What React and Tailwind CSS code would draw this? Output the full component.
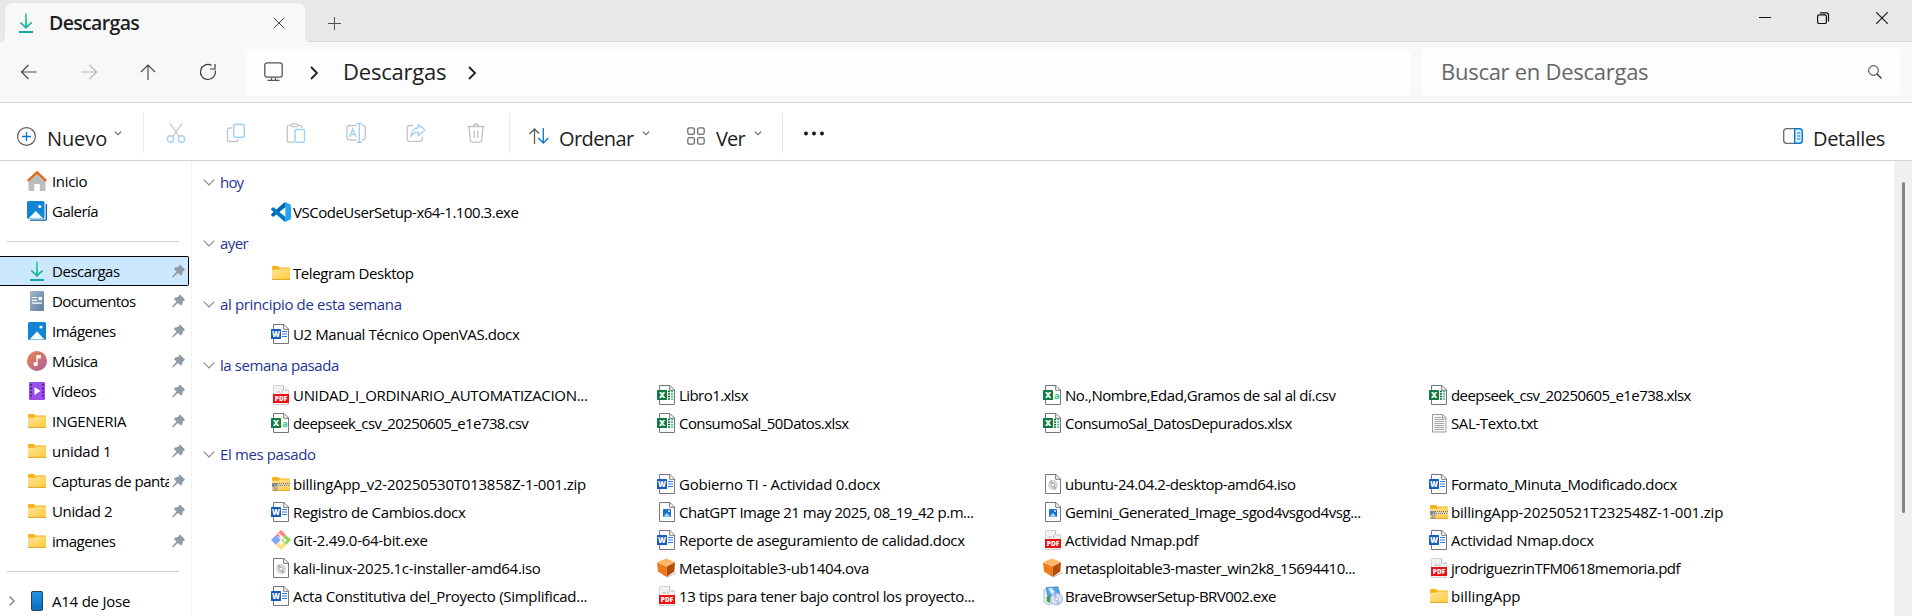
import React from "react";

/* ---------- file and folder icons (20 x 20) ---------- */

const Svg = ({ w = 20, h = 20, className = "", children }) => (
  <svg width={w} height={h} viewBox={`0 0 ${w} ${h}`} fill="none" className={`shrink-0 ${className}`}>
    {children}
  </svg>
);

const Page = () => (
  <>
    <path d="M2.5 .5H13l4.5 4.5v14.5h-15z" fill="#fff" stroke="#767676" />
    <path d="M12.7 .5v4.8h4.8" stroke="#767676" />
  </>
);

const Word = () => (
  <Svg>
    <Page />
    <path d="M11 7.500h5M11 12.500h5" stroke="#2b7cd3" />
    <path d="M11 10h5" stroke="#2b7cd3" />
    <rect x="0" y="5" width="10" height="10" rx=".6" fill="#185abd" />
    <text x="5" y="13" textAnchor="middle" fontSize="8.500" fontWeight="800" fill="#fff" fontFamily="Open Sans, sans-serif" textLength="8" lengthAdjust="spacingAndGlyphs">W</text>
  </Svg>
);

const ExcelBadge = () => (
  <>
    <rect x="0" y="5" width="10" height="10" rx=".6" fill="#107c41" />
    <text x="5" y="13" textAnchor="middle" fontSize="8.500" fontWeight="800" fill="#fff" fontFamily="Open Sans, sans-serif">X</text>
  </>
);

const Xlsx = () => (
  <Svg>
    <Page />
    <path d="M11 6.500h2M11 9h2M11 11.500h2M11 14h2" stroke="#185c37" strokeWidth="1.500" />
    <path d="M14 6.500h2.200M14 9h2.200M14 11.500h2.200M14 14h2.200" stroke="#33c481" strokeWidth="1.500" />
    <ExcelBadge />
  </Svg>
);

const Csv = () => (
  <Svg>
    <Page />
    <text x="11" y="13.500" fontSize="9.500" fontWeight="700" fill="#33c481" fontFamily="Open Sans, sans-serif">a</text>
    <ExcelBadge />
  </Svg>
);

const Pdf = () => (
  <Svg>
    <path d="M3 .5h9.500L17.500 5v14.500H2.500V1z" fill="#f1f1f1" stroke="#d2d2d2" />
    <path d="M12.500 .5V5h5" fill="#fff" stroke="#c2c2c2" />
    <path d="M6 8c0-2 2.500-2 2.500 0M10 5.500c1.500 0 1.500 2.500 0 2.500" stroke="#cfcfcf" strokeWidth="1.500" />
    <rect x="2" y="9" width="16" height="9" fill="#ee1111" />
    <text x="10" y="15.800" textAnchor="middle" fontSize="6.300" fontWeight="800" fill="#fff" fontFamily="Open Sans, sans-serif" textLength="12.500" lengthAdjust="spacingAndGlyphs">PDF</text>
  </Svg>
);

const Iso = () => (
  <Svg>
    <Page />
    <circle cx="10" cy="11" r="5" fill="#d6d9da" />
    <path d="M10 11 6 8a5 5 0 0 1 3-2zM10 11l4 3a5 5 0 0 1-3 2z" fill="#b2b7b9" />
    <circle cx="10" cy="11" r="1.800" fill="#f7f7f7" stroke="#a0a5a7" strokeWidth=".8" />
  </Svg>
);

const ImageFile = () => (
  <Svg>
    <Page />
    <rect x="6" y="7" width="8" height="8" rx=".8" fill="#1b6fd0" />
    <path d="m6.300 14.800 3.500-3.800 3.800 3.800z" fill="#9fdcff" />
    <circle cx="12" cy="9" r=".9" fill="#fff" />
  </Svg>
);

const Txt = () => (
  <Svg>
    <path d="M3.500 1.500h10.500l3 3v14.500h-13.500z" fill="#f5f5f5" stroke="#9b9b9b" />
    <path d="M13.500 1.500v3.500h3.500" stroke="#9b9b9b" />
    <path d="M5.500 4.500h7M5.500 6.500h9.500M5.500 8.500h9.500M5.500 10.500h9.500M5.500 12.500h9.500M5.500 14.500h9.500M5.500 16.500h9.500" stroke="#a8a8a8" />
  </Svg>
);

const FolderShape = () => (
  <>
    <defs>
      <linearGradient id="folder" x1="0" y1="0" x2="1" y2="1">
        <stop offset="0" stopColor="#ffe59a" />
        <stop offset="1" stopColor="#ffcb3d" />
      </linearGradient>
    </defs>
    <path d="M1 4.200a1.200 1.200 0 0 1 1.200-1.200h4.600L8.600 4.500H18a1 1 0 0 1 1 1V8H1z" fill="#f7b21b" />
    <path d="M1 6.800h6.500l1.500-1.300h10V16.200H1z" fill="url(#folder)" />
    <path d="M1 16.400h18" stroke="#e5a21c" strokeWidth="1" />
  </>
);

const Folder = () => <Svg><FolderShape /></Svg>;

const Zip = () => (
  <Svg>
    <FolderShape />
    <path d="M6 9.700h13" stroke="#6f6f6f" strokeWidth="1.400" strokeDasharray="1 1" />
    <path d="M6 11.300h13" stroke="#e3e3e3" strokeWidth="1.600" />
    <path d="M6 11.500h13" stroke="#6f6f6f" strokeWidth="1" strokeDasharray="1 1" strokeDashoffset="1" />
    <rect x="1" y="9" width="5" height="4" fill="#8b8b8b" />
    <rect x="3" y="11" width="3" height="5.500" fill="#b9b9b9" stroke="#777" strokeWidth=".6" />
  </Svg>
);

const VsCode = () => (
  <Svg>
    <path d="M14.600 5 2.800 14.500a1 1 0 0 1-1.200 0L.4 13.400a.9.900 0 0 1 0-1.300L13.500 .3 14.600 1z" fill="#0065a9" />
    <path d="M14.600 15 2.800 5.500a1 1 0 0 0-1.200 0L.4 6.600a.9.900 0 0 0 0 1.300l13.100 11.800 1.100-.7z" fill="#007acc" />
    <path d="M14.300 .1 19.300 2.400q.7.400.7 1.100v13q0 .7-.7 1.100l-5 2.300z" fill="#24a5f3" />
  </Svg>
);

const Git = () => (
  <Svg>
    <path d="M10 0 15 5 10 9.500 5 5z" fill="#ff7f7a" />
    <path d="M5 5 9.500 10 5 15 0 10z" fill="#7fa9ff" />
    <path d="M15 5 20 10 15 15 10.500 10z" fill="#8fd45c" />
    <path d="M10 10.500 15 15 10 20 5 15z" fill="#ffe07a" />
    <path d="M7.500 3.500 10 6v7.500M10 6.500l4 3.500" stroke="#fff" strokeWidth="1.200" />
    <circle cx="10" cy="6.500" r="1.600" fill="#fff" />
    <circle cx="10" cy="13.500" r="1.600" fill="#fff" />
    <circle cx="14" cy="10.300" r="1.500" fill="#fff" />
  </Svg>
);

const Ova = () => (
  <Svg>
    <path d="M9.500 19 19 14.500v1L10 19.800z" fill="#8d8d8d" opacity=".6" />
    <path d="M0 4.200 9 .5l9 3.500-8.500 4.300z" fill="#ffb766" />
    <path d="M0 4.200 9.500 8.300V19L1 13.500z" fill="#ef7a1a" />
    <path d="M9.500 8.300 18 4l-.7 9.500L9.500 19z" fill="#b34d08" />
    <path d="M0 4.200 9.500 8.300 18 4" stroke="#ffd199" strokeWidth=".6" />
  </Svg>
);

const Brave = () => (
  <Svg>
    <path d="M1 4 6 2l4 2v13l-5 2-4-3z" fill="#e6edf4" stroke="#8ea4bd" strokeWidth=".7" />
    <path d="M3 1.500 15 .8 17 9 5 11z" fill="#4fa4ea" stroke="#4a82bf" strokeWidth=".7" />
    <path d="M5 2.500 9 2l3 4-3 3z" fill="#d3edff" />
    <path d="M3.500 11 7 10v7l-3-1.500z" fill="#35a04a" />
    <circle cx="13.500" cy="13" r="6" fill="#dce2f6" stroke="#8795c4" strokeWidth=".7" />
    <path d="M13.500 13 10 9a6 6 0 0 1 3-1.500zM13.500 13l3.500 4a6 6 0 0 1-3 1.500z" fill="#a5b6ef" />
    <circle cx="13.500" cy="13" r="1.700" fill="#fff" stroke="#8795c4" strokeWidth=".6" />
  </Svg>
);

/* ---------- navigation pane icons ---------- */

const Home = () => (
  <Svg>
    <path d="M1.500 9.500 10 2l8.500 7.500V19a1 1 0 0 1-1 1H12.800v-7H7.200v7H2.500a1 1 0 0 1-1-1z" fill="#bdbdbd" />
    <path d="M.7 9.800 10 1.300l9.300 8.500" stroke="#e4691a" strokeWidth="2.300" />
  </Svg>
);

const Picture = ({ stacked }) => (
  <Svg>
    {stacked && <path d="M3 19.200h15.400a.9.900 0 0 0 .9-.9V3" stroke="#0f5aa8" strokeWidth="1.300" />}
    <rect x={stacked ? 0 : 1} y={stacked ? 0 : 1} width={stacked ? 17.5 : 18} height={stacked ? 17.8 : 18} rx="1.500" fill="#1184d6" />
    <path d={stacked ? "M1.500 17.500 8.800 10l7.400 7.500z" : "M2.500 18.500 10 10.500l7.500 8z"} fill="#f2faff" />
    <circle cx={stacked ? 12.8 : 14} cy={stacked ? 5.5 : 6} r="1.600" fill="#fff" />
  </Svg>
);

const Download = ({ w = 20 }) => (
  <Svg w={w}>
    <defs>
      <linearGradient id="dl" x1="0" y1="0" x2="0" y2="20" gradientUnits="userSpaceOnUse">
        <stop offset="0" stopColor="#3ddc84" />
        <stop offset="1" stopColor="#0fa3a3" />
      </linearGradient>
    </defs>
    <path d="M10 .5v14M4.300 9.300l5.700 5.500 5.700-5.500M3 19h14" stroke="url(#dl)" strokeWidth="1.800" />
  </Svg>
);

const Documents = () => (
  <Svg>
    <defs>
      <linearGradient id="doc" x1="0" y1="0" x2="1" y2="1">
        <stop offset="0" stopColor="#a4b9cc" />
        <stop offset="1" stopColor="#5d7e9f" />
      </linearGradient>
    </defs>
    <rect x="3" y="0" width="14" height="20" rx="1.200" fill="url(#doc)" />
    <path d="M5 6.500h5M5 9.300h5M5 12.200h10" stroke="#fff" strokeWidth="1.200" />
    <rect x="11.500" y="6" width="3.500" height="3.200" fill="#fff" />
  </Svg>
);

const Music = () => (
  <Svg>
    <defs>
      <linearGradient id="music" x1="0" y1="0" x2="1" y2="1">
        <stop offset="0" stopColor="#f08a4b" />
        <stop offset="1" stopColor="#a65a9e" />
      </linearGradient>
    </defs>
    <circle cx="10" cy="10" r="10" fill="url(#music)" />
    <path d="M10 13V4.500h3.200v2.300H10" stroke="#fff" strokeWidth="1.200" fill="#fff" />
    <circle cx="8.600" cy="13.200" r="2.100" fill="#fff" />
  </Svg>
);

const Video = () => (
  <Svg>
    <rect x="2" y="1" width="16" height="18" rx="1.200" fill="#9a4fe8" />
    <path d="M4 3v15M16 3v15" stroke="#4a1d8f" strokeWidth="1.800" strokeDasharray="1.800 1.800" />
    <path d="M7.500 6v8l6-4z" fill="#fff" />
  </Svg>
);

const Phone = () => (
  <Svg>
    <defs>
      <linearGradient id="phone" x1="0" y1="0" x2="0" y2="1">
        <stop offset="0" stopColor="#2196e3" />
        <stop offset="1" stopColor="#0b6cbf" />
      </linearGradient>
    </defs>
    <rect x="4.500" y=".5" width="11" height="19" rx="1" fill="url(#phone)" stroke="#2d3f4c" />
  </Svg>
);

const Pin = () => (
  <Svg w={13} h={14}>
    <path d="M8 .5 12.900 5.500 12 6.900 10.800 7.300 10.300 10.300 8.900 11.600 5.900 8.900 1.200 13.300.2 13.400.3 12.400 4.500 7.600 1.800 4.900 3.200 3.500 6.300 3 6.900 1.600z" fill="#8f9ba5" />
  </Svg>
);

/* ---------- command bar pieces ---------- */

const Caret = () => (
  <Svg w={8} h={5}>
    <path d="m.8.700 3.200 3L7.200.700" stroke="#666" strokeWidth="1.100" />
  </Svg>
);

const Divider = () => <div className="h-10 w-px shrink-0 bg-[#e9e9e9]" />;

const Arrow = ({ className, d, color = "#4a4a4a" }) => (
  <Svg w={18} h={18} className={className}>
    <path d={d} stroke={color} strokeWidth="1.200" />
  </Svg>
);

const gray = "#c3c3c3";
const blue = "#a3d2f5";

/* ---------- data ---------- */

const pinned = [
  ["Descargas", Download, "tracking-[-0.45px]"],
  ["Documentos", Documents, "tracking-[-0.57px]"],
  ["Imágenes", Picture, "tracking-[-0.51px]"],
  ["Música", Music, "tracking-[-0.6px]"],
  ["Vídeos", Video, "tracking-[-0.37px]"],
  ["INGENERIA", Folder, "tracking-[-0.35px]"],
  ["unidad 1", Folder, "tracking-[-0.25px]"],
  ["Capturas de pantalla", Folder, "tracking-[-0.5px]"],
  ["Unidad 2", Folder, "tracking-[-0.36px]"],
  ["imagenes", Folder, "tracking-[-0.5px]"],
];

const groups = [
  { title: "hoy", track: "tracking-[-0.8px]", files: [["VSCodeUserSetup-x64-1.100.3.exe", VsCode, "tracking-[-0.48px]"]] },
  { title: "ayer", track: "tracking-[-0.6px]", files: [["Telegram Desktop", Folder, "tracking-[-0.42px]"]] },
  { title: "al principio de esta semana", track: "tracking-[-0.35px]", files: [["U2 Manual Técnico OpenVAS.docx", Word, "tracking-[-0.42px]"]] },
  {
    title: "la semana pasada",
    track: "tracking-[-0.43px]",
    files: [
      ["UNIDAD_I_ORDINARIO_AUTOMATIZACION...", Pdf, "tracking-[-0.31px]"],
      ["Libro1.xlsx", Xlsx, "tracking-[-0.56px]"],
      ["No.,Nombre,Edad,Gramos de sal al dí.csv", Csv, "tracking-[-0.44px]"],
      ["deepseek_csv_20250605_e1e738.xlsx", Xlsx, "tracking-[-0.58px]"],
      ["deepseek_csv_20250605_e1e738.csv", Csv, "tracking-[-0.59px]"],
      ["ConsumoSal_50Datos.xlsx", Xlsx, "tracking-[-0.55px]"],
      ["ConsumoSal_DatosDepurados.xlsx", Xlsx, "tracking-[-0.53px]"],
      ["SAL-Texto.txt", Txt, "tracking-[-0.38px]"],
    ],
  },
  {
    title: "El mes pasado",
    track: "tracking-[-0.38px]",
    files: [
      ["billingApp_v2-20250530T013858Z-1-001.zip", Zip, "tracking-[-0.22px]"],
      ["Gobierno TI - Actividad 0.docx", Word, "tracking-[-0.23px]"],
      ["ubuntu-24.04.2-desktop-amd64.iso", Iso, "tracking-[-0.46px]"],
      ["Formato_Minuta_Modificado.docx", Word, "tracking-[-0.37px]"],
      ["Registro de Cambios.docx", Word, "tracking-[-0.34px]"],
      ["ChatGPT Image 21 may 2025, 08_19_42 p.m...", ImageFile, "tracking-[-0.5px]"],
      ["Gemini_Generated_Image_sgod4vsgod4vsg...", ImageFile, "tracking-[-0.44px]"],
      ["billingApp-20250521T232548Z-1-001.zip", Zip, "tracking-[-0.19px]"],
      ["Git-2.49.0-64-bit.exe", Git, "tracking-[-0.29px]"],
      ["Reporte de aseguramiento de calidad.docx", Word, "tracking-[-0.33px]"],
      ["Actividad Nmap.pdf", Pdf, "tracking-[-0.25px]"],
      ["Actividad Nmap.docx", Word, "tracking-[-0.25px]"],
      ["kali-linux-2025.1c-installer-amd64.iso", Iso, "tracking-[-0.31px]"],
      ["Metasploitable3-ub1404.ova", Ova, "tracking-[-0.33px]"],
      ["metasploitable3-master_win2k8_15694410...", Ova, "tracking-[-0.48px]"],
      ["jrodriguezrinTFM0618memoria.pdf", Pdf, "tracking-[-0.5px]"],
      ["Acta Constitutiva del_Proyecto (Simplificad...", Word, "tracking-[-0.29px]"],
      ["13 tips para tener bajo control los proyecto...", Pdf, "tracking-[-0.37px]"],
      ["BraveBrowserSetup-BRV002.exe", Brave, "tracking-[-0.53px]"],
      ["billingApp", Folder, "tracking-[0px]"],
    ],
  },
];

/* ---------- sections ---------- */

function TitleBar() {
  return (
    <header className="flex h-[42px] shrink-0 border-b border-[#d9d9d9] bg-[#e8e8e8]">
      <Svg w={5} h={5} className="mt-[37px]">
        <path d="M5 0v5H0q5 0 5-5z" fill="#f8f8f8" />
      </Svg>
      <div className="mt-[3px] -mb-px flex h-[39px] w-[300px] items-center rounded-t-lg bg-[#f8f8f8] pl-[11px]">
        <Download />
        <span className="mt-px ml-[13px] w-[211px] text-[19.5px] leading-6 font-semibold tracking-[-0.65px] text-[#1f1f1f]">Descargas</span>
        <Svg w={12} h={12} className="ml-[13px]">
          <path d="m.7.700 10.600 10.600M11.300.700.700 11.300" stroke="#4a4a4a" />
        </Svg>
      </div>
      <Svg w={5} h={5} className="mt-[37px]">
        <path d="M0 0v5h5q-5 0-5-5z" fill="#f8f8f8" />
      </Svg>
      <Svg w={13} h={13} className="mt-[17px] ml-[18px]">
        <path d="M6.500 0v13M0 6.500h13" stroke="#4f4f4f" />
      </Svg>
      <div className="mt-3 mr-6 ml-auto flex gap-[46px]">
        <Svg w={12} h={12}><path d="M0 5.500h12" stroke="#111" /></Svg>
        <Svg w={13} h={12}>
          <rect x=".6" y="2.800" width="8.800" height="8.700" rx="1.500" stroke="#111" strokeWidth="1.200" />
          <path d="M3 .8h6.500a2 2 0 0 1 2 2V9.500" stroke="#111" strokeWidth="1.200" />
        </Svg>
        <Svg w={12} h={12}><path d="m.3.300 11.400 11.400M11.700.300.300 11.700" stroke="#111" strokeWidth="1.100" /></Svg>
      </div>
    </header>
  );
}

function AddressBar() {
  return (
    <nav className="flex h-[61px] shrink-0 items-start border-b border-[#d6d6d6] bg-[#f8f8f8] text-[22px]">
      <div className="flex h-[60px] w-[246px] items-center pl-[20px]">
        <Arrow d="M16.500 9H1.500M8.500 2 1.500 9l7 7" />
        <Arrow className="ml-[42px]" color="#b9b9b9" d="M1.500 9h15M9.500 2l7 7-7 7" />
        <Arrow className="ml-[41px]" d="M9 17V2M2 9l7-7 7 7" />
        <Arrow className="ml-[42px]" color="#3a3a3a" d="M16.300 7.500A7.500 7.500 0 1 1 12.500 2.400M16 1v5h-5" />
      </div>
      <div className="mt-[7px] flex h-[47px] w-[1165px] items-center rounded-md bg-[#fdfdfd]">
        <Svg w={19} h={19} className="-mt-[2px] ml-[18px]">
          <rect x=".8" y=".8" width="17.400" height="14.400" rx="2.500" stroke="#555" strokeWidth="1.300" />
          <path d="M7.500 15.500v2.500M11.500 15.500v2.500M3.500 18.300h12" stroke="#555" strokeWidth="1.200" />
        </Svg>
        <Svg w={9} h={14} className="ml-[27px]"><path d="m1 1 6 6-6 6" stroke="#1d1d1d" strokeWidth="1.800" /></Svg>
        <span className="-mt-[3px] ml-[24px] w-[125px] leading-7 tracking-[-0.22px] text-[#1d1d1d]">Descargas</span>
        <Svg w={9} h={14}><path d="m1 1 6 6-6 6" stroke="#1d1d1d" strokeWidth="1.800" /></Svg>
      </div>
      <div className="mt-[6px] ml-[10px] flex h-[48px] w-[479px] items-center justify-between rounded-md bg-[#fdfdfd] pr-[18px] pl-5">
        <span className="-mt-[2px] leading-7 tracking-[-0.27px] text-[#666]">Buscar en Descargas</span>
        <Svg w={14} h={14}>
          <circle cx="5.500" cy="5.500" r="4.800" stroke="#2a2a2a" />
          <path d="m9 9 4.500 4.500" stroke="#2a2a2a" strokeWidth="1.200" />
        </Svg>
      </div>
    </nav>
  );
}

function CommandBar() {
  return (
    <div className="flex h-[58px] shrink-0 items-center border-b border-[#d2d2d2] bg-white pt-[3px] text-[20px] leading-7 text-[#1d1d1d]">
      <div className="flex w-[143px] items-center pl-[17px]">
        <Svg w={19} h={19} className="mt-[6px]">
          <circle cx="9.500" cy="9.500" r="8.900" stroke="#5c5c5c" strokeWidth="1.200" />
          <path d="M9.500 5v9M5 9.500h9" stroke="#0078d4" strokeWidth="1.300" />
        </Svg>
        <span className="mt-[11px] ml-[11px] w-[67px] tracking-[-0.1px]">Nuevo</span>
        <Caret />
      </div>
      <Divider />
      <div className="flex w-[365px] items-center gap-[40px] pl-[22px]">
        <Svg>
          <path d="M4 .5 13.500 14M16 .5 6.500 14" stroke={gray} strokeWidth="1.300" />
          <circle cx="4.500" cy="16" r="3.200" stroke={blue} strokeWidth="1.400" />
          <circle cx="15.500" cy="16" r="3.200" stroke={blue} strokeWidth="1.400" />
        </Svg>
        <Svg>
          <path d="M6 5H3.500a2 2 0 0 0-2 2v9.500a2 2 0 0 0 2 2H10a2 2 0 0 0 2-2V16" stroke={gray} strokeWidth="1.300" />
          <rect x="7.700" y="1.300" width="10.600" height="13" rx="2" stroke={blue} strokeWidth="1.500" />
        </Svg>
        <Svg>
          <path d="M8 19.200H2.800a1.500 1.500 0 0 1-1.500-1.500V3.800a1.500 1.500 0 0 1 1.500-1.500H5M12 2.300h2.200a1.500 1.500 0 0 1 1.500 1.500V5" stroke={gray} strokeWidth="1.300" />
          <rect x="5" y=".8" width="7" height="2.800" rx="1.400" stroke={gray} strokeWidth="1.200" />
          <rect x="9" y="6.500" width="9.500" height="12.700" rx="1.500" stroke={blue} strokeWidth="1.500" />
        </Svg>
        <Svg>
          <path d="M10.500 2.500H3.500a2.500 2.500 0 0 0-2.500 2.500v9.500a2.500 2.500 0 0 0 2.500 2.500h7M16 2.500a3 3 0 0 1 3.300 2.500v9.500A3 3 0 0 1 16 17" stroke={gray} strokeWidth="1.300" />
          <path d="M13.300 .8v18.400M10.500 .7h5.500M10.500 19.300h5.500M3.500 14 6.700 6l3.200 8M4.600 11.300h4.200" stroke={blue} strokeWidth="1.400" />
        </Svg>
        <Svg>
          <path d="M7 2.500H3.500a2.300 2.300 0 0 0-2.300 2.300V16a2.300 2.300 0 0 0 2.300 2.300H14a2.300 2.300 0 0 0 2.300-2.300v-2" stroke={gray} strokeWidth="1.300" />
          <path d="M12.500 1.500 19 7l-6.500 5.500V9.300C9 9.300 6.500 10.500 5 13.500c0-5 3-8.500 7.500-8.800z" stroke={blue} strokeWidth="1.400" strokeLinejoin="round" />
        </Svg>
        <Svg>
          <path d="M1 3.500h18M7.500 3.500a2.500 2.500 0 0 1 5 0M3 3.500 4.300 17.500a2 2 0 0 0 2 1.700h7.400a2 2 0 0 0 2-1.700L17 3.500M8.200 7.500v7.500M11.800 7.500v7.500" stroke={gray} strokeWidth="1.300" />
        </Svg>
      </div>
      <Divider />
      <div className="flex w-[177px] items-center pl-[19px]">
        <Svg w={20} h={16} className="mt-[6px]">
          <path d="M5.500 16V1M.5 6 5.500 1 10 5.500" stroke="#5c5c5c" strokeWidth="1.300" />
          <path d="M14.300 0v15M9.300 10l5 5 5-5" stroke="#0078d4" strokeWidth="1.300" />
        </Svg>
        <span className="mt-[11px] ml-[10px] w-[83px] tracking-[-0.6px]">Ordenar</span>
        <Caret />
      </div>
      <div className="flex w-[95px] items-center">
        <Svg w={18} h={18} className="mt-[6px]">
          {[0.8, 10.6].map((x) => [0.8, 10.6].map((y) => (
            <rect key={`${x}-${y}`} x={x} y={y} width="6.600" height="6.600" rx="1.800" stroke="#6b6b6b" strokeWidth="1.300" />
          )))}
        </Svg>
        <span className="mt-[11px] ml-[11px] w-[38px] tracking-[-0.8px]">Ver</span>
        <Caret />
      </div>
      <Divider />
      <Svg w={20} h={5} className="ml-[21px]">
        <circle cx="2" cy="2.500" r="2" fill="#1d1d1d" />
        <circle cx="10" cy="2.500" r="2" fill="#1d1d1d" />
        <circle cx="18" cy="2.500" r="2" fill="#1d1d1d" />
      </Svg>
      <div className="ml-auto flex w-[129px] items-center">
        <Svg w={20} h={16} className="mt-[6px]">
          <path d="M11.500 .7H3.500A2.800 2.800 0 0 0 .7 3.500v9a2.800 2.800 0 0 0 2.800 2.800h8" stroke="#6b6b6b" strokeWidth="1.300" />
          <path d="M11.700 .7h4.800a2.800 2.800 0 0 1 2.800 2.800v9a2.800 2.800 0 0 1-2.800 2.800h-4.800z" fill="#e3f2fd" stroke="#0078d4" strokeWidth="1.400" />
          <path d="M14 5h3.500M14 8h3.500M14 11h3.500" stroke="#0078d4" strokeWidth="1.200" />
        </Svg>
        <span className="mt-[11px] ml-[10px] tracking-[-0.35px]">Detalles</span>
      </div>
    </div>
  );
}

function SideItem({ label, icon: Icon, track, pin, selected, ...rest }) {
  return (
    <div
      className={`flex h-[30px] w-[189px] shrink-0 items-center pl-[27px] ${
        selected ? "rounded-r-[2px] border border-l-0 border-black bg-[#cce8ff]" : ""
      }`}
    >
      <Icon {...rest} />
      <span className={`ml-[5px] w-[117px] overflow-hidden whitespace-nowrap ${track}`}>{label}</span>
      {pin && <span className="ml-[3px]"><Pin /></span>}
    </div>
  );
}

function Sidebar() {
  return (
    <aside className="flex w-[192px] shrink-0 flex-col border-r border-[#f2f2f2] pt-[5px]">
      <SideItem label="Inicio" icon={Home} track="tracking-[-0.33px]" />
      <SideItem label="Galería" icon={Picture} stacked track="tracking-[-0.5px]" />
      <div className="mt-[15px] mb-[14px] ml-[7px] h-px w-[172px] shrink-0 bg-[#cfcfcf]" />
      {pinned.map(([label, icon, track], i) => (
        <SideItem key={label} label={label} icon={icon} track={track} pin selected={i === 0} />
      ))}
      <div className="mt-[15px] mb-[14px] ml-[7px] h-px w-[172px] shrink-0 bg-[#cfcfcf]" />
      <div className="flex h-[30px] shrink-0 items-center pl-[8px]">
        <Svg w={8} h={10}><path d="m1.500.500 4.500 4.500-4.500 4.500" stroke="#8a8a8a" strokeWidth="1.500" /></Svg>
        <span className="ml-[11px]"><Phone /></span>
        <span className="ml-[5px] tracking-[-0.22px]">A14 de Jose</span>
      </div>
    </aside>
  );
}

function FileList() {
  return (
    <main className="min-w-0 flex-1 overflow-hidden pt-[5px]">
      {groups.map((g) => (
        <section key={g.title} className="mb-px">
          <h2 className="flex h-8 items-center pl-[11px] text-[#1f3592]">
            <Svg w={12} h={7}><path d="m.7.700 5.300 5.300L11.300.700" stroke="#8a8a8a" strokeWidth="1.200" /></Svg>
            <span className={`ml-[5px] ${g.track}`}>{g.title}</span>
          </h2>
          <div className="grid grid-cols-[repeat(4,386px)] pl-[79px]">
            {g.files.map(([name, Icon, track]) => (
              <div key={name} className="flex h-7 items-center whitespace-nowrap">
                <Icon />
                <span className={`ml-[2px] ${track}`}>{name}</span>
              </div>
            ))}
          </div>
        </section>
      ))}
    </main>
  );
}

export default function App() {
  return (
    <div className="flex h-[616px] w-[1912px] flex-col overflow-hidden bg-white font-['Open_Sans','Noto_Sans',sans-serif] text-[15px] leading-5 text-black">
      <TitleBar />
      <AddressBar />
      <CommandBar />
      <div className="flex min-h-0 flex-1 overflow-hidden">
        <Sidebar />
        <FileList />
        <div className="w-[18px] shrink-0 bg-[#f0f0f0] pt-[21px] pl-2">
          <div className="h-[331px] w-[3px] rounded-full bg-[#858585]" />
        </div>
      </div>
    </div>
  );
}
